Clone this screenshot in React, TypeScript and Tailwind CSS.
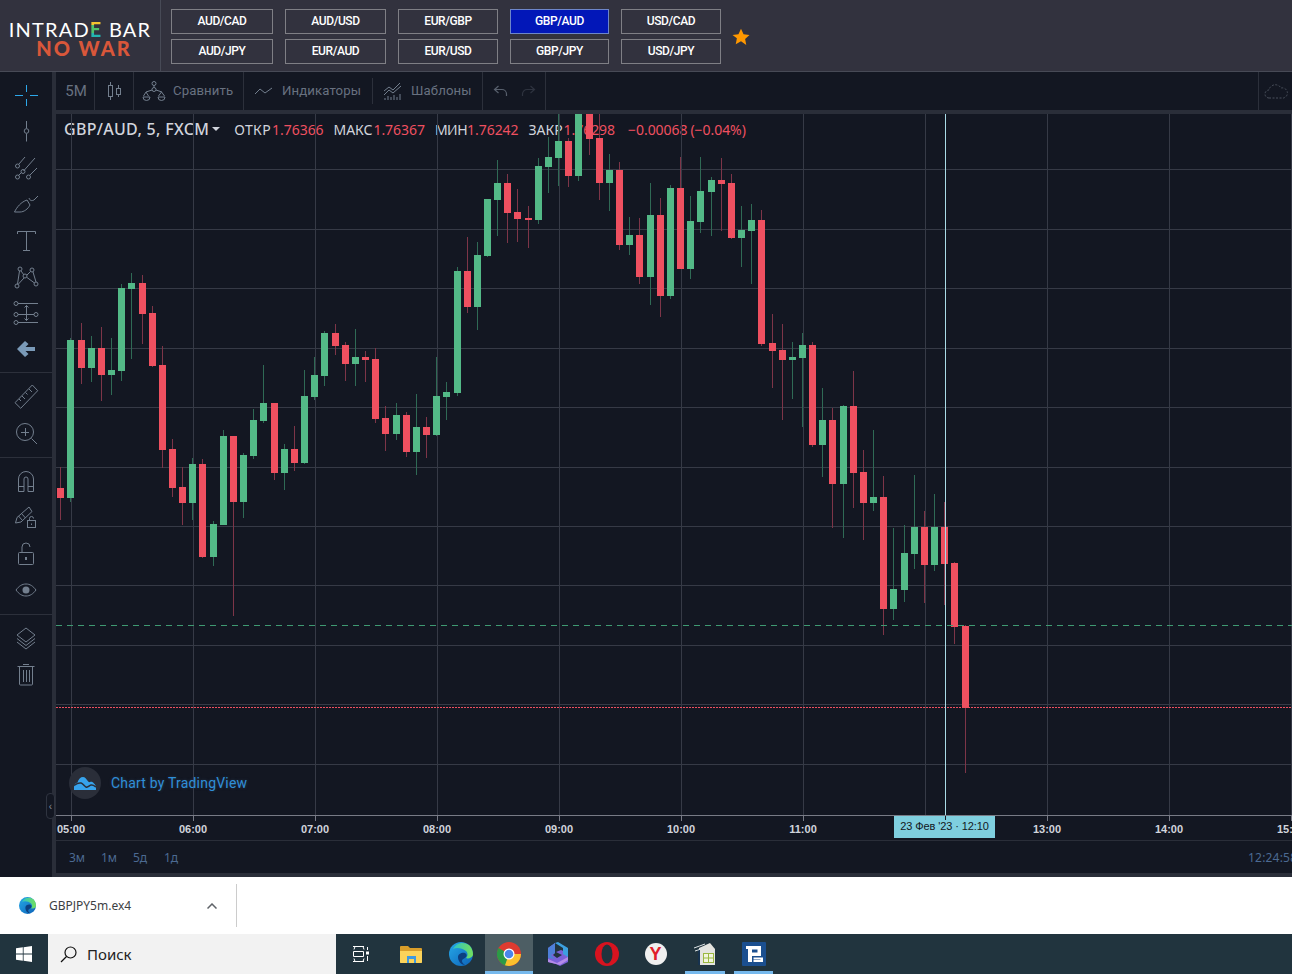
import React from "react"

type Candle = [number, number, number, number, number, 0 | 1]

// x, body top, body bottom, wick top, wick bottom, 1 = green
const candles: Candle[] = [
  [60, 488, 498, 467, 520, 0], [70, 340, 498, 338, 502, 1], [81, 340, 368, 323, 384, 0], [91, 348, 368, 336, 382, 1],
  [101, 348, 375, 327, 401, 0], [111, 370, 375, 338, 395, 1], [121, 288, 371, 284, 381, 1], [131, 283, 289, 273, 359, 1],
  [142, 283, 314, 275, 344, 0], [152, 313, 366, 306, 367, 0], [162, 365, 450, 346, 468, 0], [172, 449, 488, 439, 497, 0],
  [182, 487, 503, 467, 525, 0], [192, 464, 503, 458, 520, 1], [202, 464, 557, 459, 558, 0], [213, 524, 557, 521, 566, 1],
  [223, 436, 525, 430, 525, 1], [233, 436, 502, 436, 616, 0], [243, 455, 502, 453, 518, 1], [253, 420, 456, 409, 459, 1],
  [263, 403, 421, 365, 423, 1], [274, 403, 473, 403, 480, 0], [284, 449, 473, 444, 490, 1], [294, 449, 463, 426, 471, 0],
  [304, 396, 463, 370, 464, 1], [314, 375, 397, 357, 400, 1], [324, 333, 376, 331, 386, 1], [335, 333, 346, 324, 355, 0],
  [345, 345, 364, 342, 381, 0], [355, 357, 364, 329, 386, 1], [365, 357, 360, 351, 382, 0], [375, 359, 419, 348, 423, 0],
  [385, 418, 434, 406, 451, 0], [396, 415, 434, 403, 440, 1], [406, 415, 452, 412, 457, 0], [416, 427, 452, 394, 475, 1],
  [426, 427, 435, 417, 458, 0], [436, 396, 435, 357, 436, 1], [446, 392, 397, 382, 420, 1], [457, 271, 393, 267, 396, 1],
  [467, 271, 307, 237, 313, 0], [477, 255, 307, 242, 330, 1], [487, 199, 256, 199, 257, 1], [497, 183, 200, 160, 236, 1],
  [507, 183, 213, 174, 243, 0], [517, 212, 219, 189, 242, 0], [528, 218, 220, 206, 248, 0], [538, 166, 220, 158, 224, 1],
  [548, 157, 167, 137, 193, 1], [558, 141, 158, 114, 186, 1], [568, 141, 176, 138, 187, 0], [578, 114, 176, 114, 181, 1],
  [589, 114, 139, 114, 155, 0], [599, 138, 183, 114, 200, 0], [609, 170, 183, 154, 211, 1], [619, 170, 245, 162, 250, 0],
  [629, 235, 245, 217, 255, 1], [639, 235, 277, 218, 284, 0], [650, 215, 277, 183, 305, 1], [660, 215, 296, 198, 317, 0],
  [670, 188, 296, 185, 299, 1], [680, 188, 269, 157, 269, 0], [690, 221, 269, 196, 279, 1], [700, 191, 222, 157, 233, 1],
  [711, 180, 192, 177, 236, 1], [721, 180, 184, 158, 231, 0], [731, 183, 238, 174, 239, 0], [741, 230, 238, 206, 267, 1],
  [751, 220, 231, 204, 284, 1], [761, 220, 344, 210, 346, 0], [772, 343, 351, 314, 388, 0], [782, 350, 360, 324, 420, 0],
  [792, 357, 360, 342, 399, 1], [802, 345, 358, 333, 427, 1], [812, 345, 445, 342, 447, 0], [822, 420, 445, 388, 477, 1],
  [832, 420, 484, 408, 528, 0], [843, 406, 484, 405, 538, 1], [853, 406, 473, 371, 508, 0], [863, 472, 503, 450, 540, 0],
  [873, 497, 503, 430, 511, 1], [883, 497, 609, 476, 635, 0], [893, 589, 609, 528, 620, 1], [904, 553, 590, 525, 602, 1],
  [914, 527, 554, 475, 569, 1], [924, 527, 565, 511, 603, 0], [934, 527, 565, 494, 571, 1], [944, 527, 564, 502, 605, 0],
  [954, 563, 627, 562, 644, 0], [965, 626, 708, 625, 773, 0],
]

const gridX = [71, 193, 315, 437, 559, 681, 803, 925, 1047, 1169, 1291]
const gridY = [169, 229, 288, 348, 407, 467, 526, 585, 645, 704, 764]
// 12:00 sits under the crosshair label
const hours = ["05:00", "06:00", "07:00", "08:00", "09:00", "10:00", "11:00", "", "13:00", "14:00", "15:00"]

const pairs = [
  { w: "w-[102px]", items: ["AUD/CAD", "AUD/JPY"] },
  { w: "w-[101px]", items: ["AUD/USD", "EUR/AUD"] },
  { w: "w-[100px]", items: ["EUR/GBP", "EUR/USD"] },
  { w: "w-[99px]", items: ["GBP/AUD", "GBP/JPY"] },
  { w: "w-[100px]", items: ["USD/CAD", "USD/JPY"] },
]

const Ico = ({ children, size = 28 }: { children: React.ReactNode; size?: number }) => (
  <svg width={size} height={size} viewBox="0 0 28 28" fill="none" stroke="#737f8e" strokeWidth="1">
    {children}
  </svg>
)

const toolGroups: React.ReactNode[][] = [
  [
    <Ico key="a"><path d="M14.500 4v7M14.500 18v7M3 14.500h8M18 14.500h8" stroke="#2da8ea" /></Ico>,
    <Ico key="b"><path d="M14.500 4v7.500M14.500 16.500v8" /><circle cx="14.500" cy="14" r="2.300" /></Ico>,
    <Ico key="c">
      <path d="M7 10L13 3M11.500 17L23 4M18 21L25 14M6.500 21.500L9.500 18.500" />
      <circle cx="5.500" cy="12" r="2" /><circle cx="5.500" cy="23" r="2" /><circle cx="11" cy="17.500" r="2" /><circle cx="16.500" cy="23" r="2" />
    </Ico>,
    <Ico key="d"><path d="M2.500 22C5 17 9 12 15 10l3 5C16 19 12 22 8 22H2.500M17 8c1 3 3 3 5 2l4-4" /></Ico>,
    <Ico key="e"><path d="M5.500 8V5.500h18V8M14.500 5.500v18.500M11 24.500h7" /></Ico>,
    <Ico key="f">
      <path d="M9 8l3 4M18.500 8.500L15 12M12 15L6 21.500M15 14.500L22.500 20M7.500 8L5.500 21M21 9L24 19" />
      <circle cx="8" cy="6" r="2" /><circle cx="20" cy="7" r="2" /><circle cx="13" cy="13" r="2" /><circle cx="5" cy="23" r="2" /><circle cx="24" cy="21" r="2" />
    </Ico>,
    <Ico key="g">
      <path d="M6 4.500h20M6 15.500h16M6 23.500h20M14.500 6.500v15M12.500 8.500l2-2 2 2M12.500 19.500l2 2 2-2" />
      <circle cx="4" cy="4.500" r="2" /><circle cx="4" cy="15.500" r="2" /><circle cx="24" cy="15.500" r="2" /><circle cx="4" cy="23.500" r="2" />
    </Ico>,
    <svg key="h" width="28" height="28" viewBox="0 0 28 28" fill="#7a9ab8"><path d="M13 6l3.500 3-3 3H23v4h-9.500l3 3-3.500 3L5 14z" /></svg>,
  ],
  [
    <Ico key="a"><path d="M3 19.700L8.700 25.300 25.700 7.700 20.300 2zM7 16l2 2M10 13l3 3M13.500 9.500l2 2M17 6l3 3" /></Ico>,
    <Ico key="b"><circle cx="13" cy="13" r="8.500" /><path d="M13.500 9v8M9 13.500h8M19.500 19.500L25 25" /></Ico>,
  ],
  [
    <Ico key="a"><path d="M6.500 24.500V12a7.500 7.500 0 0 1 15 0v12.500h-5.500V12a2 2 0 0 0-4 0v12.500zM6.500 19.500H12M16 19.500h5.500" /></Ico>,
    <Ico key="b">
      <path d="M3.500 20L5 14.500 17 4l3 4.500L9 19zM6.500 13l4 4.500M9.500 10.500l4 4.500" />
      <rect x="15.500" y="17.500" width="8" height="7" /><path d="M17.500 17.500v-2a2 2 0 0 1 4 0" /><path d="M19.500 20.500v1.500" />
    </Ico>,
    <Ico key="c">
      <rect x="6.500" y="12.500" width="15" height="12" rx="1" /><path d="M10 12.500V7a4 4 0 0 1 8 0" /><rect x="13" y="17" width="2" height="3" fill="#737f8e" stroke="none" />
    </Ico>,
    <Ico key="d"><path d="M4 14c3-4 6-6 10-6s7 2 10 6c-3 4-6 6-10 6s-7-2-10-6z" /><circle cx="14" cy="14" r="3.500" fill="#737f8e" stroke="none" /></Ico>,
  ],
  [
    <Ico key="a"><path d="M14 4l9 7-9 7-9-7zM5 14.500l9 7 9-7M5 18l9 7 9-7" /></Ico>,
    <Ico key="b"><path d="M7.500 7v17a1 1 0 0 0 1 1h11a1 1 0 0 0 1-1V7M5.500 6.500h17M11 4.500h6M11.500 10v12M14.500 10v12M17.500 10v12" /></Ico>,
  ],
]

const Chart = () => (
  <svg className="absolute inset-0" width="1236" height="701" viewBox="56 114 1236 701" shapeRendering="crispEdges">
    {gridX.map((x) => <rect key={x} x={x} y={114} width="1" height="701" fill="#363a46" />)}
    {gridY.map((y) => <rect key={y} x={56} y={y} width="1236" height="1" fill="#363a46" />)}
    {candles.map(([x, top, bottom, wTop, wBot, up]) => (
      <g key={x}>
        <rect x={x} y={wTop} width="1" height={wBot - wTop} fill={up ? "#2f6a55" : "#7d3548"} />
        <rect x={x - 3} y={top} width="7" height={bottom - top} fill={up ? "#53b987" : "#ef5060"} />
      </g>
    ))}
    <line x1="56" x2="1292" y1="625.500" y2="625.500" stroke="#3f9a72" strokeDasharray="6 5" />
    <line x1="56" x2="1292" y1="707.500" y2="707.500" stroke="#ef5060" strokeDasharray="2 1" />
    <rect x={945} y={114} width="1" height="701" fill="#a9dbe6" />
  </svg>
)

const Sep = () => <div className="w-px self-stretch bg-[#2c303b]" />

const TopBar = () => (
  <div className="flex h-[38px] items-center bg-[#131722] font-['Roboto',sans-serif] text-[13.200px] tracking-[0.1px] text-[#687180]">
    <div className="w-[38px] pl-[2px] text-center text-[15px]">5M</div>
    <Sep />
    <div className="flex w-[38px] justify-center">
      <svg width="18" height="20" viewBox="0 0 18 20" fill="none" stroke="#737f8e">
        <path d="M5.500 1v18M13.500 4v12" /><rect x="3.500" y="4.500" width="4" height="11" fill="#131722" /><rect x="11.500" y="7.500" width="4" height="6" fill="#131722" />
      </svg>
    </div>
    <Sep />
    <div className="flex w-[109px] items-center gap-[7px] pl-[8px]">
      <svg width="24" height="22" viewBox="0 0 24 22" fill="none" stroke="#737f8e">
        <circle cx="12" cy="3.500" r="2" /><circle cx="12" cy="9.500" r="2" /><path d="M12 5.500v2M10 10L4 12M14 10l6 2M1 17h7a3.500 3.500 0 0 1-7 0zM1.500 16l2.500-4 2.500 4M16 17h7a3.500 3.500 0 0 1-7 0zM16.500 16l3-4 3 4" />
      </svg>
      <span>Сравнить</span>
    </div>
    <Sep />
    <div className="flex w-[128px] items-center gap-[8px] pl-[10px]">
      <svg width="20" height="12" viewBox="0 0 20 12" fill="none" stroke="#737f8e"><path d="M1 9l5-5 5 4 7-5" /></svg>
      <span>Индикаторы</span>
    </div>
    <div className="h-[26px] w-px bg-[#2c303b]" />
    <div className="flex w-[109px] items-center gap-[8px] pl-[10px]">
      <svg width="20" height="20" viewBox="0 0 20 20" fill="none" stroke="#737f8e">
        <path d="M1 10l5-4 4 3 7-7M1 14l5-5 4 3 8-7" /><path d="M2 19v-2M5 19v-4M8 19v-3M11 19v-5M14 19v-3M17 19v-6" />
      </svg>
      <span>Шаблоны</span>
    </div>
    <Sep />
    <div className="flex w-[62px] items-center justify-center gap-[13px]">
      <svg width="15" height="12" viewBox="0 0 15 12" fill="none" stroke="#58606d" strokeWidth="1.200"><path d="M5.500 1L1.500 4.500l4 3.500M1.500 4.500H9a4.500 4.500 0 0 1 4.500 4.500v2" /></svg>
      <svg width="15" height="12" viewBox="0 0 15 12" fill="none" stroke="#2e333f" strokeWidth="1.200"><path d="M9.500 1l4 3.500-4 3.500M13.500 4.500H6A4.500 4.500 0 0 0 1.500 9v2" /></svg>
    </div>
    <Sep />
    <div className="flex-1" />
    <Sep />
    <div className="flex w-[33px] justify-center">
      <svg width="24" height="18" viewBox="0 0 24 18" fill="none" stroke="#4a505c" strokeDasharray="2 1.500">
        <path d="M5 16a4 4 0 0 1 0-8 6.500 6.500 0 0 1 12-2 5 5 0 0 1 2.500 10z" />
      </svg>
    </div>
  </div>
)

const Legend = () => (
  <div className="absolute left-[8px] top-[5px] flex h-[20px] items-center whitespace-nowrap font-['Noto_Sans',sans-serif] text-[14px] tracking-[-0.05px] text-[#d1d4dc]">
    <span className="text-[16px] font-medium tracking-[0.3px]">GBP/AUD, 5, FXCM</span>
    <span className="ml-[3px] mr-[14px] h-0 w-0 border-x-[4px] border-t-[4px] border-x-transparent border-t-[#d1d4dc]" />
    <span className="tracking-[0.4px]">ОТКР</span><span className="ml-[1px] mr-[10px] text-[#ef5060]">1.76366</span>
    <span>МАКС</span><span className="ml-[1px] mr-[10px] text-[#ef5060]">1.76367</span>
    <span className="tracking-[-0.5px]">МИН</span><span className="mr-[10px] text-[#ef5060]">1.76242</span>
    <span>ЗАКР</span><span className="ml-[1px] mr-[13px] text-[#ef5060]">1.76298</span>
    <span className="mr-[3px] text-[#ef5060]">−0.00068</span>
    <span className="text-[#ef5060]">(−0.04%)</span>
  </div>
)

const Watermark = () => (
  <div className="absolute bottom-[16px] left-[13px] flex items-center gap-[10px]">
    <div className="flex h-8 w-8 items-center justify-center rounded-full bg-[#2a2e39]">
      <svg width="22" height="13" viewBox="0 0 22 13">
        <path d="M0 13V10C0 7.500 1.500 6 3.500 5.500 4.500 2 6.500 0 9 0c2 0 3 1.500 4 3 1 1.500 2 2.500 3 2 1.500-.5 3 0 4 1.500 1.500 1 2 3 2 4.500v2z" fill="#37a3ec" />
        <path d="M0 8.500c2-1.500 5-3 7-2.500 2 .5 3 3 5 4 2 1 3-1.500 5-2s3 .5 5 2" fill="none" stroke="#2a2e39" strokeWidth="1.500" />
      </svg>
    </div>
    <span className="font-['Roboto',sans-serif] text-[14px] tracking-[0.2px] text-[#2f8fd8] [text-shadow:0_0_3px_#2a3a52]">Chart by TradingView</span>
  </div>
)

const Axis = () => (
  <div className="relative h-[25px] overflow-hidden border-t border-[#787b86] bg-[#131722]">
    <div className="-ml-[46px] flex">
      {hours.map((h, i) => (
        <div key={i} className="flex w-[122px] shrink-0 flex-col items-center">
          <div className="h-[5px] w-px bg-[#787b86]" />
          <span className="mt-[1px] font-['Liberation_Sans',sans-serif] text-[11px] font-bold leading-[14px] text-[#d1d4dc]">{h}</span>
        </div>
      ))}
    </div>
    <div className="absolute left-[838px] top-0 h-[22px] w-[101px] bg-[#7fcfdf] pt-[3px] text-center font-['Liberation_Sans',sans-serif] text-[11px] leading-[15px] tracking-[-0.1px] text-[#131722]">
      23 Фев '23 · 12:10
    </div>
    <div className="absolute left-[889px] top-0 h-[4px] w-px bg-[#131722]" />
  </div>
)

const RangeBar = () => (
  <div className="flex h-[33px] items-center overflow-hidden border-t border-[#2a2e39] bg-[#131722] pl-[13px] pt-[2px] font-['Noto_Sans',sans-serif] text-[12px] text-[#4c6a92]">
    <span className="w-[32px]">3м</span>
    <span className="w-[32px]">1м</span>
    <span className="w-[31px]">5д</span>
    <span className="w-[30px]">1д</span>
    <div className="flex-1" />
    <span className="-mr-[14px] w-[58px] whitespace-nowrap tracking-[0.2px]">12:24:58</span>
  </div>
)

const EdgeIcon = ({ size }: { size: number }) => (
  <svg width={size} height={size} viewBox="0 0 24 24">
    <defs>
      <linearGradient id={`edge${size}`} x1="0" y1="0" x2="1" y2="1">
        <stop offset="0" stopColor="#26a9e8" /><stop offset="1" stopColor="#0d62b8" />
      </linearGradient>
      <linearGradient id={`edgeg${size}`} x1="0" y1="0" x2="1" y2="0">
        <stop offset="0" stopColor="#2fc4c4" /><stop offset="1" stopColor="#74e05c" />
      </linearGradient>
    </defs>
    <circle cx="12" cy="12" r="12" fill={`url(#edge${size})`} />
    <path d="M4 7C7 1 14-1 20 3c3 3 4 6 4 10-1 3-5 4-7 3 2-2 2-5 0-7-4-3-9-4-13-2z" fill={`url(#edgeg${size})`} />
    <path d="M9 15c0-3 4-5 7-4 2 1 2 3 1 4-2 2-4 2-4 4 0 1 1 3 3 4-4 0-7-4-7-8z" fill="#0c3f80" />
  </svg>
)

const Taskbar = () => (
  <div className="flex h-[40px] bg-[#21343e]">
    <div className="flex w-[48px] items-center justify-center">
      <svg width="16" height="16" viewBox="0 0 16 16" fill="#fff"><path d="M0 2.300L6.800 1.300v6.300H0zM7.600 1.200L16 0v7.600H7.600zM0 8.400h6.800v6.300L0 13.700zM7.600 8.400H16V16l-8.400-1.200z" /></svg>
    </div>
    <div className="flex w-[288px] items-center gap-[10px] bg-[#f2f2f2] pl-[12px] font-['Noto_Sans',sans-serif] text-[15px] text-[#222]">
      <svg width="17" height="17" viewBox="0 0 17 17" fill="none" stroke="#111" strokeWidth="1.200"><circle cx="10.500" cy="6.500" r="5.500" /><path d="M6.500 10.500L1 16" /></svg>
      <span>Поиск</span>
    </div>
    <div className="flex w-[49px] items-center justify-center">
      <svg width="17" height="16" viewBox="0 0 17 16" fill="none" stroke="#fff"><path d="M1 .5h11M3 .5l-1 3M11 .5l1 3M1.500 5.500h10v5h-10zM1 15.500h11M3 15.500l-1-3M11 15.500l1-3M15.500 1v3M15.500 10v5" /><rect x="14" y="5.500" width="3" height="3" fill="#fff" stroke="none" /></svg>
    </div>
    <div className="flex w-[51px] items-center justify-center">
      <svg width="22" height="18" viewBox="0 0 22 18">
        <path d="M0 2a1 1 0 0 1 1-1h7l2 2h11a1 1 0 0 1 1 1v13a1 1 0 0 1-1 1H1a1 1 0 0 1-1-1z" fill="#d99e2a" />
        <path d="M0 6h22v11a1 1 0 0 1-1 1H1a1 1 0 0 1-1-1z" fill="#fbd35a" />
        <rect x="7" y="11" width="9" height="7" fill="#3e9ae0" /><rect x="9" y="14" width="5" height="4" fill="#fbd35a" />
      </svg>
    </div>
    <div className="flex w-[49px] items-center justify-center"><EdgeIcon size={24} /></div>
    <div className="flex w-[48px] flex-col items-center justify-center border-b-[3px] border-[#76b9ed] bg-[#4d5e64] pt-[3px]">
      <svg width="24" height="24" viewBox="0 0 24 24">
        <circle cx="12" cy="12" r="12" fill="#de3b30" />
        <path d="M12 12L1.600 6A12 12 0 0 0 12 24z" fill="#2b9a46" />
        <path d="M12 12h12A12 12 0 0 1 8 23.300z" fill="#fbc02d" />
        <circle cx="12" cy="12" r="5.500" fill="#fff" /><circle cx="12" cy="12" r="4.300" fill="#4a86ea" />
      </svg>
    </div>
    <div className="flex w-[50px] items-center justify-center">
      <svg width="20" height="24" viewBox="0 0 20 24">
        <path d="M0 6l7-5v10l-2 2 4 3 5-3-6-3 5-2 7 3v9l-8 4-4-2-8-2z" fill="#7b61d8" />
        <path d="M7 1l3-1 10 6v9l-5-3V6z" fill="#3ca0e0" />
        <path d="M0 17l9 4 11-6v3l-8 5-4-1-8-2z" fill="#b58be8" />
        <path d="M0 6l7-5v10l-4 2 4 4-7-1z" fill="#4e7fd8" />
      </svg>
    </div>
    <div className="flex w-[48px] items-center justify-center">
      <svg width="24" height="24" viewBox="0 0 24 24">
        <ellipse cx="12" cy="12" rx="12" ry="12" fill="#d8131f" /><ellipse cx="12" cy="12" rx="5.500" ry="9.500" fill="#21343e" />
      </svg>
    </div>
    <div className="flex w-[49px] items-center justify-center">
      <div className="flex h-[22px] w-[22px] items-center justify-center rounded-full bg-[#f0f0f0] font-['Liberation_Sans',sans-serif] text-[18px] font-bold leading-none text-[#e0202a]">Y</div>
    </div>
    <div className="flex w-[49px] flex-col items-center pt-[8px]">
      <svg width="24" height="24" viewBox="0 0 24 24">
        <path d="M6 6l11-5 5 6v16H6z" fill="#e4e4df" />
        <path d="M5 7h2v16H5z" fill="#17324e" />
        <path d="M1 6c4-1 7-3 11-4M2 9c4-1 7-3 11-3" stroke="#dfe5e6" fill="none" />
        <path d="M10 11h11v10H10z" fill="#9bb840" /><path d="M11 12h4v3.500h-4zM16 12h4v3.500h-4zM11 16.500h4V20h-4zM16 16.500h4V20h-4z" fill="#f2f5de" />
      </svg>
      <div className="mt-auto h-[3px] w-[40px] bg-[#76b9ed]" />
    </div>
    <div className="flex w-[49px] flex-col items-center pt-[8px]">
      <svg width="24" height="24" viewBox="0 0 24 24">
        <rect width="24" height="24" rx="1" fill="#1b4f8f" />
        <path d="M4 4h15v10h-9v6H6V7H4zM10 7.500v3h5.500v-3zM11.500 15.500H21V20h-9.500v-2h7v-.500h-7z" fill="#fff" />
      </svg>
      <div className="mt-auto h-[3px] w-[39px] bg-[#76b9ed]" />
    </div>
  </div>
)

export default function App() {
  return (
    <div className="flex h-[974px] w-[1292px] flex-col overflow-hidden bg-[#131722]">
      <header className="flex h-[72px] items-stretch border-b border-[#474a56] bg-[#32323e]">
        <div className="flex w-[161px] flex-col items-center border-r border-[#474a56] pt-[19px]">
          <div className="whitespace-nowrap font-['Lato',sans-serif] text-[20px] font-normal leading-[20px] tracking-[1.200px] text-white">
            INTRAD<span className="bg-[linear-gradient(#f4c430_33%,#4fc36a_33%,#4fc36a_66%,#23b5b0_66%)] bg-clip-text font-bold text-transparent">E</span> BAR
          </div>
          <div className="ml-[8px] whitespace-nowrap font-['Lato',sans-serif] text-[20px] font-black leading-[18px] tracking-[2px] text-[#d9573a]">NO WAR</div>
        </div>
        <div className="flex items-start gap-[12px] pl-[10px] pt-[9px]">
          {pairs.map((col) => (
            <div key={col.items[0]} className={`flex flex-col gap-[5px] ${col.w}`}>
              {col.items.map((p) => (
                <div
                  key={p}
                  className={
                    p === "GBP/AUD"
                      ? "flex h-[25px] items-center justify-center border border-[#6d86c9] bg-[#0217b8] pb-[2px] font-['Roboto',sans-serif] text-[12px] font-medium tracking-[-0.4px] text-white"
                      : "flex h-[25px] items-center justify-center border border-[#7f7f85] pb-[2px] font-['Roboto',sans-serif] text-[12px] font-medium tracking-[-0.4px] text-white"
                  }
                >
                  {p}
                </div>
              ))}
            </div>
          ))}
          <svg className="ml-[-1px] mt-[19px]" width="18" height="18" viewBox="0 0 24 24" fill="#ff9800">
            <path d="M12 1l3.400 7.300 7.900 1-5.800 5.500 1.500 7.900L12 17.800l-7 3.900 1.500-7.900L.7 9.300l7.900-1z" />
          </svg>
        </div>
      </header>

      <main className="relative flex h-[805px]">
        <aside className="flex w-[52px] flex-col bg-[#131722]">
          {toolGroups.map((group, i) => (
            <div
              key={i}
              className={
                i === 0
                  ? "h-[301px] border-b border-[#2c303b] pt-[5px]"
                  : i === 1
                    ? "h-[85px] border-b border-[#2c303b] pt-[6px]"
                    : i === 2
                      ? "h-[157px] border-b border-[#2c303b] pt-[5px]"
                      : "pt-[5px]"
              }
            >
              {group.map((icon, j) => (
                <div key={j} className="flex h-[36.300px] items-center justify-center">{icon}</div>
              ))}
            </div>
          ))}
        </aside>
        <div className="w-[4px] bg-[#2a2e39]" />
        <div className="flex w-[1236px] flex-col">
          <TopBar />
          <div className="h-[4px] bg-[#2a2e39]" />
          <div className="relative h-[701px] overflow-hidden bg-[#131722]">
            <Legend />
            <Chart />
            <Watermark />
          </div>
          <Axis />
          <RangeBar />
          <div className="h-[4px] bg-[#2a2e39]" />
        </div>
        <div className="absolute left-[46px] top-[721px] flex h-[26px] w-[9px] items-center justify-center rounded-[4px] border border-[#2f3440] bg-[#131722] font-['Liberation_Sans',sans-serif] text-[10px] text-[#8a919c]">‹</div>
      </main>

      <div className="flex h-[57px] bg-white">
        <div className="flex w-[236px] items-center pl-[19px]">
          <EdgeIcon size={17} />
          <span className="ml-[13px] font-['Noto_Sans',sans-serif] text-[12px] text-[#3c4043]">GBPJPY5m.ex4</span>
          <svg className="ml-[76px]" width="10" height="6" viewBox="0 0 10 6" fill="none" stroke="#5f6368" strokeWidth="1.500"><path d="M.5 5.500L5 1l4.500 4.500" /></svg>
        </div>
        <div className="my-[7px] w-px bg-[#ccc]" />
      </div>

      <Taskbar />
    </div>
  )
}
